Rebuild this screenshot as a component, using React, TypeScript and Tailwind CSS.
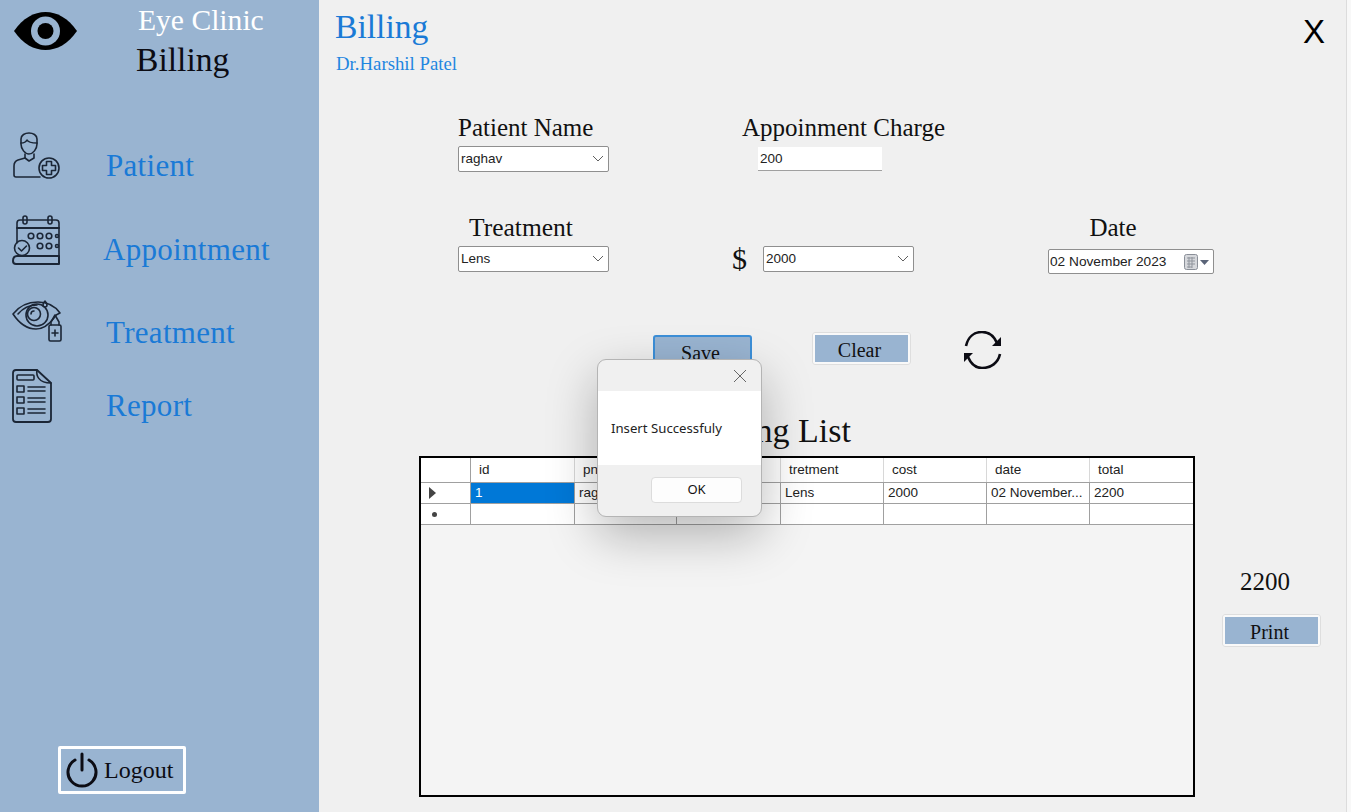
import React from 'react';

const cols = [
  { name: 'id', value: '1', w: 'w-[104px]' },
  { name: 'pname', value: 'raghav', w: 'w-[102px]' },
  { name: '', value: '', w: 'w-[104px]' },
  { name: 'tretment', value: 'Lens', w: 'w-[103px]' },
  { name: 'cost', value: '2000', w: 'w-[103px]' },
  { name: 'date', value: '02 November...', w: 'w-[103px]' },
  { name: 'total', value: '2200', w: 'w-[104px]' },
];

function Chevron() {
  return (
    <svg width="12" height="8" viewBox="0 0 12 8" fill="none" stroke="#606060" strokeWidth="1">
      <path d="M1 1l5 5 5-5" />
    </svg>
  );
}

function Combo({ value, width }: { value: string; width: string }) {
  return (
    <div className={`flex h-[26px] items-center justify-between rounded-[2px] border border-[#8f8f8f] bg-white pl-[2px] pr-[4px] font-['Liberation_Sans',sans-serif] text-[13.5px] text-[#222] ${width}`}>
      <span>{value}</span>
      <Chevron />
    </div>
  );
}

function FormButton({ label, focused }: { label: string; focused?: boolean }) {
  return (
    <div className={`flex h-[33px] items-center justify-center rounded-[3px] bg-[#99b4d1] pr-[4px] pt-[2px] font-['Liberation_Serif',serif] text-[20px] text-[#111] ${focused ? 'w-[99px] border-2 border-[#3c8fd8]' : 'w-[99px] border-[3px] border-[#f9f9f9] outline outline-1 -outline-offset-1 outline-[#dedede]'}`}>
      {label}
    </div>
  );
}

function NavItem({ label, icon, height, gap, textClass }: { label: string; icon: React.ReactNode; height: string; gap: string; textClass: string }) {
  return (
    <div className={`flex ${height} ${gap}`}>
      <div className="w-[50px] shrink-0">{icon}</div>
      <span className={`font-['Liberation_Serif',serif] text-[31px] leading-none tracking-[0.3px] text-[#1a7ad6] ${textClass}`}>{label}</span>
    </div>
  );
}

const iconStroke = { fill: 'none', stroke: '#1b2636', strokeWidth: 1.6, strokeLinecap: 'round', strokeLinejoin: 'round' } as const;

function PatientIcon() {
  return (
    <svg className="ml-[-2px] mt-[-2px]" width="50" height="50" viewBox="0 0 50 50" {...iconStroke}>
      <path d="M11 8c0-4 4-6 8-6s8 2 8 6v5c0 5-4 10-8 10s-8-5-8-10z" />
      <path d="M11 12c3 0 5-1 6-3 1 2 5 3 10 3" />
      <path d="M15 23v4l4 3 5-3v-4" />
      <path d="M15 27l-7 2c-3 1-4 3-4 6v9c0 1 1 2 2 2h24" />
      <circle cx="39" cy="37" r="10" />
      <path d="M36.5 30.5h5v4h4v5h-4v4h-5v-4h-4v-5h4z" />
    </svg>
  );
}

function CalendarIcon() {
  return (
    <svg className="mt-[-1px]" width="50" height="50" viewBox="0 0 50 50" {...iconStroke}>
      <path d="M5 28V8c0-2 1-3 3-3h36c2 0 3 1 3 3v38" />
      <rect x="11" y="1" width="4" height="8" rx="2" />
      <rect x="36" y="1" width="4" height="8" rx="2" />
      <path d="M5 13h42" strokeWidth="2" />
      <circle cx="19" cy="21" r="2.8" />
      <circle cx="28" cy="21" r="2.8" />
      <circle cx="37" cy="21" r="2.8" />
      <circle cx="45" cy="21" r="1.5" />
      <circle cx="28" cy="31" r="2.8" />
      <circle cx="37" cy="31" r="2.8" />
      <circle cx="45" cy="31" r="1.5" />
      <circle cx="10" cy="33" r="7.5" />
      <path d="M6.5 33l3 3 5-5" />
      <path d="M1 46c0-3 1-5 4-5h42M1 46c0 2 1 3 3 3h43V41" strokeWidth="2" />
    </svg>
  );
}

function EyeDropIcon() {
  return (
    <svg className="mt-[-1px]" width="50" height="44" viewBox="0 0 50 44" {...iconStroke}>
      <path d="M1 15C8 6 17 3 26 3c9 0 17 4 22 11-3 1-5 3-6 5-6 8-12 11-18 11C14 30 7 24 1 15z" />
      <path d="M6 15c5-6 12-9 19-9" />
      <circle cx="25" cy="16" r="11" />
      <circle cx="22" cy="15" r="6.5" />
      <path d="M19 15a3 3 0 0 1 3-3" />
      <path d="M33 2c1 1 2 3 2 4a2 2 0 0 1-4 0c0-1 1-3 2-4z" />
      <rect x="37" y="26" width="12" height="16" rx="1.5" />
      <path d="M39 26v-3l4-7 4 7v3" />
      <path d="M43 31v6M40 34h6" />
    </svg>
  );
}

function ReportIcon() {
  return (
    <svg width="42" height="54" viewBox="0 0 42 54" {...iconStroke}>
      <path d="M25 1H4C2 1 1 2 1 4v46c0 2 1 3 3 3h32c2 0 3-1 3-3V14z" strokeWidth="1.8" />
      <path d="M25 1c-1 5 1 13 14 13" />
      <rect x="5" y="6" width="17" height="5" rx="1" />
      <rect x="5" y="17" width="7" height="6" />
      <rect x="5" y="28" width="7" height="6" />
      <rect x="5" y="39" width="7" height="6" />
      <path d="M16 18h17M16 22h17M16 29h17M16 33h17M16 40h17M16 44h17" />
    </svg>
  );
}

export default function App() {
  return (
    <div className="relative flex h-screen w-full overflow-hidden bg-[#f0f0f0]">
      {/* Sidebar */}
      <aside className="flex h-full w-[319px] shrink-0 flex-col bg-[#99b4d1]">
        <div className="flex h-[133px] shrink-0">
          <div className="pl-[14px] pt-[12px]">
            <svg width="63" height="38" viewBox="0 0 63 38">
              <path d="M0 19C9 6 20 0 31.5 0S54 6 63 19C54 32 43 38 31.5 38S9 32 0 19z" fill="#000" />
              <circle cx="31.5" cy="19" r="14.5" fill="#99b4d1" />
              <circle cx="31.5" cy="19" r="8" fill="#000" />
            </svg>
          </div>
          <div className="flex flex-col pl-[59px] font-['Liberation_Serif',serif]">
            <span className="ml-[2px] mt-[2px] text-[29.6px] leading-[36px] text-white">Eye Clinic</span>
            <span className="mt-[3px] text-[33.6px] leading-[38px] text-[#0c0c14]">Billing</span>
          </div>
        </div>
        <div className="flex flex-col pl-[12px]">
          <NavItem label="Patient" icon={<PatientIcon />} height="h-[83px]" gap="gap-[44px]" textClass="mt-[17px]" />
          <NavItem label="Appointment" icon={<CalendarIcon />} height="h-[84px]" gap="gap-[41px]" textClass="mt-[18px]" />
          <NavItem label="Treatment" icon={<EyeDropIcon />} height="h-[69px]" gap="gap-[44px]" textClass="mt-[17px]" />
          <NavItem label="Report" icon={<ReportIcon />} height="h-[60px]" gap="gap-[44px]" textClass="mt-[21px]" />
        </div>
        <div className="mt-auto pb-[18px] pl-[58px]">
          <div className="flex h-[48px] w-[128px] items-center gap-[5px] rounded-[2px] border-[3px] border-white pl-[4px]">
            <svg width="34" height="36" viewBox="0 0 34 36" fill="none" stroke="#0c0c14" strokeWidth="3" strokeLinecap="round">
              <path d="M17 2v16" />
              <path d="M10 8a14 14 0 1 0 14 0" />
            </svg>
            <span className="font-['Liberation_Serif',serif] text-[24px] text-[#0c0c14]">Logout</span>
          </div>
        </div>
      </aside>

      {/* Main panel */}
      <main className="relative flex h-full flex-1 flex-col">
        <header className="flex h-[113px] shrink-0 justify-between pl-[16px] pr-[21px]">
          <div className="flex flex-col font-['Liberation_Serif',serif]">
            <span className="mt-[7px] text-[33.6px] leading-[40px] text-[#1a7ad6]">Billing</span>
            <span className="ml-[1px] mt-[7px] text-[18.8px] leading-[20px] text-[#1f86e0]">Dr.Harshil Patel</span>
          </div>
          <span className="mt-[13px] font-['Liberation_Sans',sans-serif] text-[33px] leading-[38px] text-black">X</span>
        </header>

        {/* Form */}
        <section className="ml-[139px] grid h-[218px] shrink-0 grid-cols-[284px_306px_auto] content-start font-['Liberation_Serif',serif]">
          <div className="h-[100px]">
            <div className="h-[33px] text-[25px] leading-[29px] text-[#111]">Patient Name</div>
            <Combo value="raghav" width="w-[151px]" />
          </div>
          <div className="col-span-2 h-[100px]">
            <div className="h-[34px] text-[25px] leading-[29px] text-[#111]">Appoinment Charge</div>
            <div className="ml-[16px] flex h-[24px] w-[124px] items-center border-b border-b-[#a0a0a0] bg-white pl-[2px] pt-[1px] font-['Liberation_Sans',sans-serif] text-[13.5px] text-[#222]">200</div>
          </div>
          <div>
            <div className="h-[33px] pl-[11px] text-[25.5px] leading-[29px] text-[#111]">Treatment</div>
            <Combo value="Lens" width="w-[151px]" />
          </div>
          <div className="flex items-center gap-[16px] self-start pt-[33px]">
            <span className="ml-[-10px] text-[30px] leading-[26px] text-[#111]">$</span>
            <Combo value="2000" width="w-[151px]" />
          </div>
          <div>
            <div className="h-[36px] w-[130px] text-center text-[25px] leading-[29px] text-[#111]">Date</div>
            <div className="flex h-[25px] w-[166px] items-center justify-between rounded-[2px] border border-[#8f8f8f] bg-white pl-[1px] pr-[4px] pt-[1px] font-['Liberation_Sans',sans-serif] text-[13.7px] text-[#222]">
              <span>02 November 2023</span>
              <div className="flex items-center gap-[2px]">
                <svg width="14" height="16" viewBox="0 0 14 16">
                  <rect x="0.5" y="0.5" width="13" height="15" rx="2" fill="#d6d8dc" stroke="#8a8f98" />
                  <path d="M3 4h8M3 7h8M3 10h8M3 13h5M5 3v11M8 3v11" stroke="#8f949c" strokeWidth="1" />
                </svg>
                <svg width="9" height="5" viewBox="0 0 9 5"><path d="M0 0h9L4.5 5z" fill="#5a6478" /></svg>
              </div>
            </div>
          </div>
        </section>

        {/* Buttons */}
        <section className="ml-[334px] flex h-[37px] shrink-0 items-start">
          <div className="mt-[4px]"><FormButton label="Save" focused /></div>
          <div className="ml-[60px] mt-[1px]"><FormButton label="Clear" /></div>
          <svg className="ml-[53px]" width="38" height="38" viewBox="0 0 38 38" fill="none" stroke="#0c0c14" strokeWidth="2.6">
            <path d="M2 15C4 6 10 1 18 1c7 0 12 4 15 11" />
            <path d="M36 23c-2 9-9 14-18 14-6 0-11-4-14-11" />
            <path d="M37 6v9h-9z" fill="#0c0c14" stroke="none" />
            <path d="M0 31v-9h9z" fill="#0c0c14" stroke="none" />
          </svg>
        </section>

        <h2 className="ml-[376px] mt-[43px] h-[45px] shrink-0 font-['Liberation_Serif',serif] text-[34px] font-normal leading-[40px] text-[#111]">Billing List</h2>

        {/* Table and total */}
        <section className="flex shrink-0 items-start">
          <div className="ml-[100px] h-[341px] w-[776px] border-2 border-black bg-[#f4f4f4] font-['Liberation_Sans',sans-serif] text-[13.5px] text-[#222]">
            <div className="flex h-[25px] border-b border-[#a0a0a0] bg-white">
              <div className="w-[50px] shrink-0 border-r border-[#a0a0a0]" />
              {cols.map((c, i) => (
                <div key={i} className={`flex shrink-0 items-center border-r border-[#d8d8d8] pl-[8px] pt-[1px] last:border-r-0 ${c.w}`}>{c.name}</div>
              ))}
            </div>
            <div className="flex h-[21px] border-b border-[#a0a0a0] bg-white">
              <div className="flex w-[50px] shrink-0 items-center border-r border-[#a0a0a0] pl-[8px]">
                <svg width="7" height="12" viewBox="0 0 7 12"><path d="M0 0l7 6-7 6z" fill="#444" /></svg>
              </div>
              {cols.map((c, i) => (
                <div key={i} className={`flex shrink-0 items-center border-r border-[#a0a0a0] pl-[4px] pt-[1px] last:border-r-0 ${c.w} ${i === 0 ? 'bg-[#0078d7] text-white' : ''}`}>{c.value}</div>
              ))}
            </div>
            <div className="flex h-[21px] border-b border-[#a0a0a0] bg-white">
              <div className="flex w-[50px] shrink-0 items-center border-r border-[#a0a0a0] pl-[11px]">
                <span className="h-[5px] w-[5px] rounded-full bg-[#444]" />
              </div>
              {cols.map((c, i) => (
                <div key={i} className={`shrink-0 border-r border-[#a0a0a0] last:border-r-0 ${c.w}`} />
              ))}
            </div>
          </div>
          <div className="ml-[27px] flex flex-col">
            <span className="ml-[18px] mt-[111px] font-['Liberation_Serif',serif] text-[25px] leading-[30px] text-[#111]">2200</span>
            <div className="mt-[17px]"><FormButton label="Print" /></div>
          </div>
        </section>
      </main>

      {/* Window edge */}
      <div className="h-full w-[5px] shrink-0 border-l border-[#dcdcdc] bg-[#f8f8f8]" />

      {/* Message box */}
      <div className="absolute left-[597px] top-[359px] flex h-[158px] w-[165px] flex-col overflow-hidden rounded-[9px] border border-[#b4b4b4] bg-[#f0f0f0] shadow-[0_18px_50px_rgba(0,0,0,0.28)]">
        <div className="flex h-[31px] shrink-0 items-center justify-end pr-[14px]">
          <svg width="14" height="14" viewBox="0 0 14 14" stroke="#666" strokeWidth="1"><path d="M1 1l12 12M13 1L1 13" /></svg>
        </div>
        <div className="flex h-[74px] shrink-0 items-center bg-white pl-[13px] pt-[2px] font-['Noto_Sans',sans-serif] text-[13.2px] text-[#222]">Insert Successfuly</div>
        <div className="flex flex-1 items-start justify-end pr-[19px] pt-[12px]">
          <div className="flex h-[26px] w-[91px] items-center justify-center rounded-[4px] border border-[#dcdcdc] bg-[#fdfdfd] font-['Noto_Sans',sans-serif] text-[13px] text-[#111]">OK</div>
        </div>
      </div>
    </div>
  );
}
